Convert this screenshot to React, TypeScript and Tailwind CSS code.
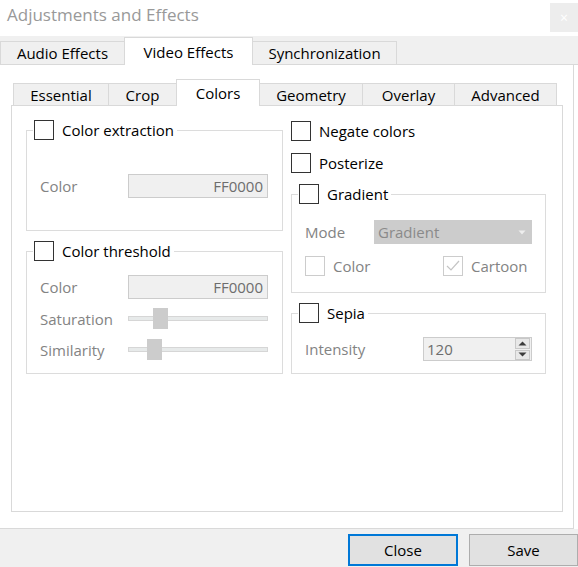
import React from 'react';

type TabDef = { label: string; w: string; selected?: boolean };

const outerTabs: TabDef[] = [
  { label: 'Audio Effects', w: 'w-[124px]' },
  { label: 'Video Effects', w: 'w-[129px]', selected: true },
  { label: 'Synchronization', w: 'w-[144px]' },
];

const innerTabs: TabDef[] = [
  { label: 'Essential', w: 'w-[95px]' },
  { label: 'Crop', w: 'w-[68px]' },
  { label: 'Colors', w: 'w-[84px]', selected: true },
  { label: 'Geometry', w: 'w-[102px]' },
  { label: 'Overlay', w: 'w-[92px]' },
  { label: 'Advanced', w: 'w-[103px]' },
];

function TabRow({ tabs, big }: { tabs: TabDef[]; big: boolean }) {
  return (
    <>
      {tabs.map((t, i) => {
        const left = i === 0 || !tabs[i - 1].selected;
        const right = t.selected || i === tabs.length - 1;
        const height = t.selected ? (big ? 'h-[28px]' : 'h-[27px]') : big ? 'h-[24px]' : 'h-[23px]';
        return (
          <div
            key={t.label}
            className={`flex shrink-0 items-center justify-center border-[#d9d9d9] border-t ${t.w} ${height} ${
              left ? 'border-l' : ''
            } ${right ? 'border-r' : ''} ${t.selected ? 'bg-white' : 'border-b bg-[#f0f0f0]'}`}
          >
            {t.label}
          </div>
        );
      })}
    </>
  );
}

function Box({ checked = false, disabled = false }: { checked?: boolean; disabled?: boolean }) {
  return (
    <span
      className={`flex h-[20px] w-[20px] shrink-0 border bg-white ${
        disabled ? 'border-[#cccccc]' : 'border-[#333333]'
      }`}
    >
      {checked && (
        <svg width="18" height="18" viewBox="0 0 18 18">
          <path d="M3 9 L7 13 L15 4" fill="none" stroke="#c4c4c4" strokeWidth="1.2" />
        </svg>
      )}
    </span>
  );
}

function Group({
  label,
  className = '',
  children,
}: {
  label: string;
  className?: string;
  children: React.ReactNode;
}) {
  return (
    <fieldset className={`border border-[#dcdcdc] ${className}`}>
      <legend className="ml-[6px] px-[1px]">
        <span className="flex h-[20px] items-center gap-[8px] pr-[2px]">
          <Box />
          <span>{label}</span>
        </span>
      </legend>
      {children}
    </fieldset>
  );
}

function ColorField() {
  return (
    <div className="flex h-[24px] w-[140px] items-center justify-end border border-[#cccccc] bg-[#f0f0f0] pr-[4px] text-[#6d6d6d]">
      FF0000
    </div>
  );
}

function Slider({ at }: { at: number }) {
  return (
    <div className="relative flex h-[21px] w-[140px] items-center">
      <div className="h-[5px] w-full border border-[#d6d6d6] bg-[#e7eaea]" />
      <div className="absolute top-0 h-[21px] w-[15px] bg-[#cccccc]" style={{ left: at }} />
    </div>
  );
}

export default function App() {
  return (
    <div className="flex h-[567px] w-[578px] flex-col overflow-hidden bg-white font-['Open_Sans',sans-serif] text-[15px] leading-[20px] text-black">
      {/* title bar */}
      <div className="flex h-[36px] shrink-0 items-start">
        <div className="ml-[7px] mt-[4px] text-[17px] leading-[22px] text-[#999999]">Adjustments and Effects</div>
        <div className="ml-auto mt-[3px] flex h-[29px] w-[28px] items-center justify-center bg-[#ededed] text-[14px] text-white">
          ×
        </div>
      </div>

      {/* outer tabs */}
      <div className="flex h-[29px] shrink-0 items-end bg-[#f0f0f0]">
        <TabRow tabs={outerTabs} big />
        <div className="h-full flex-1 border-b border-[#d9d9d9]" />
      </div>

      {/* outer pane */}
      <div className="flex h-[464px] w-[574px] shrink-0 flex-col border-b border-r border-[#d9d9d9] bg-white pl-[11px] pt-[14px]">
        <div className="flex h-[27px] w-[552px] items-end">
          <div className="h-full w-[2px] border-b border-[#d9d9d9]" />
          <TabRow tabs={innerTabs} big={false} />
          <div className="h-full flex-1 border-b border-[#d9d9d9]" />
        </div>

        <div className="flex h-[406px] w-[552px] gap-[8px] border-b border-l border-r border-[#d9d9d9] pl-[14px] pt-[14px]">
          {/* left column */}
          <div className="flex w-[257px] flex-col">
            <Group label="Color extraction">
              <div className="flex items-center px-[13px] pb-[32px] pt-[34px]">
                <span className="w-[88px] text-[#838383]">Color</span>
                <ColorField />
              </div>
            </Group>

            <Group label="Color threshold" className="mt-[10px]">
              <div className="flex flex-col px-[13px] pb-[13px] pt-[14px] text-[#838383]">
                <div className="flex items-center">
                  <span className="w-[88px]">Color</span>
                  <ColorField />
                </div>
                <div className="mt-[9px] flex items-center">
                  <span className="w-[88px]">Saturation</span>
                  <Slider at={25} />
                </div>
                <div className="mt-[10px] flex items-center">
                  <span className="w-[88px]">Similarity</span>
                  <Slider at={19} />
                </div>
              </div>
            </Group>
          </div>

          {/* right column */}
          <div className="flex w-[255px] flex-col pt-[1px]">
            <label className="flex h-[20px] items-center gap-[8px]">
              <Box />
              Negate colors
            </label>
            <label className="mt-[12px] flex h-[20px] items-center gap-[8px]">
              <Box />
              Posterize
            </label>

            <Group label="Gradient" className="mt-[11px]">
              <div className="flex flex-col px-[13px] pb-[16px] pt-[16px] text-[#838383]">
                <div className="flex items-center">
                  <span className="w-[69px]">Mode</span>
                  <div className="flex h-[24px] w-[158px] items-center bg-[#cccccc] pl-[4px] pr-[6px] text-[#8a8a8a]">
                    Gradient
                    <svg className="ml-auto" width="8" height="5" viewBox="0 0 8 5">
                      <path d="M0.5 0.5 L7.5 0.5 L4 4.5 Z" fill="#eeeeee" />
                    </svg>
                  </div>
                </div>
                <div className="mt-[12px] flex items-center">
                  <span className="flex w-[138px] items-center gap-[8px]">
                    <Box disabled />
                    Color
                  </span>
                  <span className="flex items-center gap-[8px]">
                    <Box disabled checked />
                    Cartoon
                  </span>
                </div>
              </div>
            </Group>

            <Group label="Sepia" className="mt-[10px]">
              <div className="flex items-center px-[13px] pb-[12px] pt-[14px] text-[#838383]">
                <span className="w-[118px]">Intensity</span>
                <div className="flex h-[24px] w-[109px] items-center border border-[#cccccc] bg-[#f0f0f0] pl-[3px] pr-[1px] text-[#6d6d6d]">
                  120
                  <div className="ml-auto flex h-[22px] w-[15px] flex-col gap-[1px] py-[0px]">
                    <div className="flex flex-1 items-center justify-center border border-[#c8c8c8] bg-[#e8e8e8]">
                      <svg width="9" height="5" viewBox="0 0 9 5">
                        <path d="M0.5 4.5 L8.5 4.5 L4.5 0.5 Z" fill="#3c3c3c" />
                      </svg>
                    </div>
                    <div className="flex flex-1 items-center justify-center border border-[#c8c8c8] bg-[#e8e8e8]">
                      <svg width="9" height="5" viewBox="0 0 9 5">
                        <path d="M0.5 0.5 L8.5 0.5 L4.5 4.5 Z" fill="#3c3c3c" />
                      </svg>
                    </div>
                  </div>
                </div>
              </div>
            </Group>
          </div>
        </div>
      </div>

      {/* button strip */}
      <div className="flex flex-1 items-start justify-end gap-[11px] bg-[#f0f0f0] pt-[5px]">
        <button className="flex h-[32px] w-[110px] items-center justify-center border-2 border-[#0078d7] bg-[#e1e1e1]">
          Close
        </button>
        <button className="flex h-[32px] w-[109px] items-center justify-center border border-[#adadad] bg-[#e1e1e1]">
          Save
        </button>
      </div>
    </div>
  );
}
